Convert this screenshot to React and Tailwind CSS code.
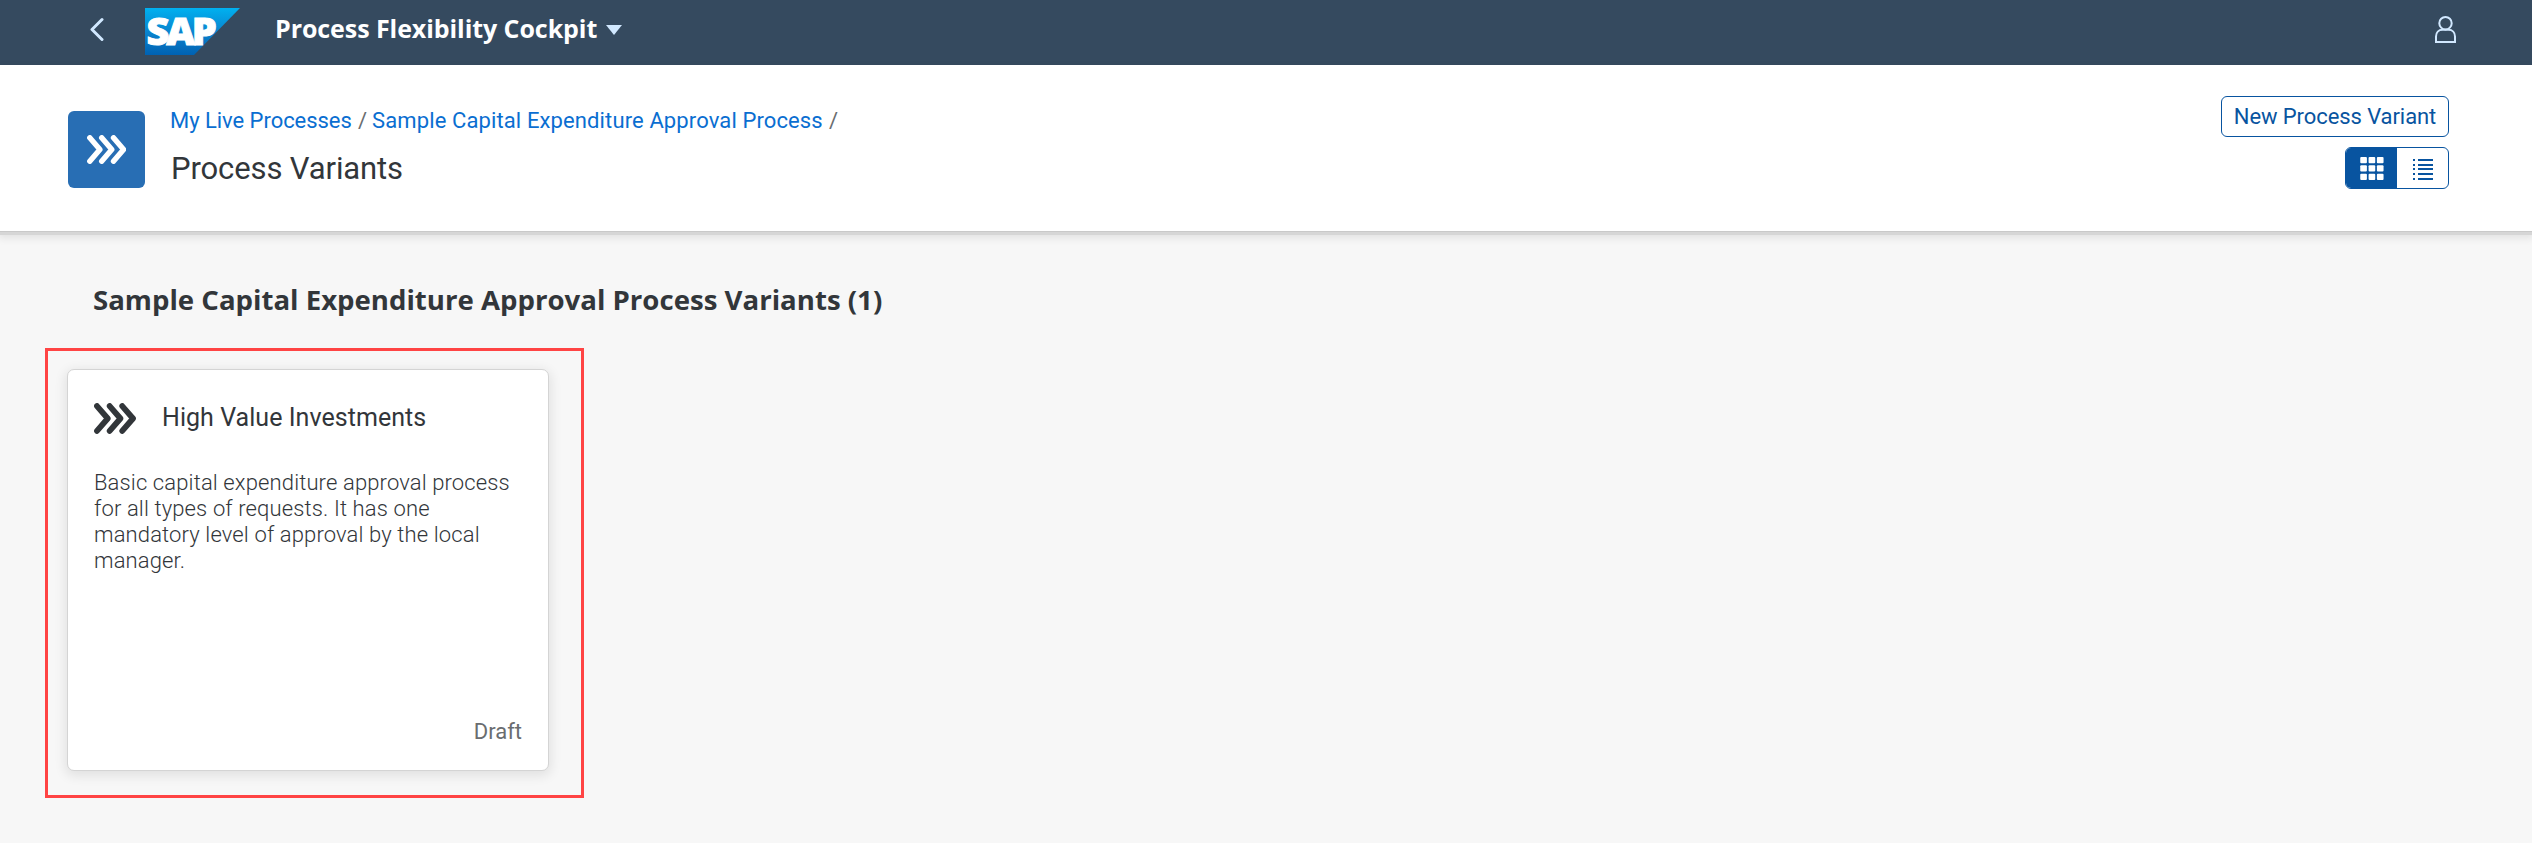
function Chevrons({ className }) {
  return (
    <svg className={className} viewBox="0 0 39.4 29" fill="none" stroke="currentColor" strokeWidth="5.4" strokeLinecap="round" strokeLinejoin="round">
      <path d="M2.8 2.8 12.9 14.5 2.8 26.2" />
      <path d="M14.7 2.8 24.8 14.5 14.7 26.2" />
      <path d="M26.5 2.8 36.6 14.5 26.5 26.2" />
    </svg>
  );
}

function SapLogo() {
  return (
    <svg className="h-[47px] w-[95px] overflow-visible" viewBox="0 0 95 47">
      <defs>
        <linearGradient id="sap" x1="0" y1="0" x2="0" y2="1">
          <stop offset="0" stopColor="#00b1f0" />
          <stop offset="0.5" stopColor="#0a85cf" />
          <stop offset="1" stopColor="#0062b3" />
        </linearGradient>
      </defs>
      <path d="M0 0H95L49 47H0Z" fill="url(#sap)" />
      <text x="1.5" y="37" textLength="67" lengthAdjust="spacingAndGlyphs" fontFamily="Open Sans, sans-serif" fontWeight="800" fontSize="37" letterSpacing="-3" fill="#fff" stroke="#fff" strokeWidth="1">SAP</text>
    </svg>
  );
}

function ShellHeader() {
  return (
    <header className="flex h-[65px] items-start bg-[#354a5f] pl-[90px] pr-[76px] text-[#d1e8ff]">
      <svg className="mt-[17px] h-[25px] w-[15px]" viewBox="0 0 15 25" fill="none" stroke="currentColor" strokeWidth="3" strokeLinecap="round" strokeLinejoin="round">
        <path d="M12 2.5 2 12.5 12 22.5" />
      </svg>
      <div className="ml-10 mt-2">
        <SapLogo />
      </div>
      <h1 className="ml-[35px] mt-[9px] w-[323px] whitespace-nowrap font-['Open_Sans',sans-serif] text-[25px] font-bold leading-[38px] tracking-[-0.07px] text-white">Process Flexibility Cockpit</h1>
      <svg className="ml-[8px] mt-[25px] h-[10px] w-4" viewBox="0 0 16 10" fill="currentColor">
        <path d="M0 0H16L8 10Z" />
      </svg>
      <svg className="ml-auto mt-4 h-[27px] w-[21px]" viewBox="0 0 21 27" fill="none" stroke="currentColor" strokeWidth="2">
        <ellipse cx="10.5" cy="7.2" rx="6.2" ry="6.2" />
        <path d="M1 26V20.5C1 16.5 3.6 13.8 7.5 13.8H13.5C17.4 13.8 20 16.5 20 20.5V26Z" />
      </svg>
    </header>
  );
}

function GridIcon() {
  const offsets = [0, 8.5, 17];
  return (
    <svg className="h-[23.5px] w-6" viewBox="0 0 24 24" fill="currentColor">
      {offsets.map((y) => offsets.map((x) => <rect key={`${x}-${y}`} x={x} y={y} width="6.8" height="6.4" rx="1" />))}
    </svg>
  );
}

function ListIcon() {
  return (
    <svg className="h-[21px] w-5" viewBox="0 0 20 21" fill="currentColor" shapeRendering="crispEdges">
      {[0, 5, 9, 14, 19].map((y) => (
        <g key={y}>
          <rect x="0" y={y} width="2" height="2" />
          <rect x="5" y={y} width="15" height="2" />
        </g>
      ))}
    </svg>
  );
}

function PageHeader() {
  return (
    <section className="relative flex h-[166px] items-start bg-white pl-[68px] pr-[83px] shadow-[0_1px_0_#c9c9c9,0_4px_0_#d6d6d6,0_5px_8px_2px_rgba(0,0,0,0.09)]">
      <div className="mt-[46px] flex h-[77px] w-[77px] items-center justify-center rounded-[6px] bg-[#286eb4] text-white">
        <Chevrons className="h-[29px] w-[39.4px]" />
      </div>
      <div className="ml-[25px] mt-[42px] whitespace-nowrap">
        <nav className="flex text-[22px] leading-[27px] text-[#0a6ed1]">
          <a className="w-[188px] tracking-[-0.04px]">My Live Processes</a>
          <span className="w-[14px] text-[#6a6d70]">/</span>
          <a className="w-[457px] tracking-[0.12px]">Sample Capital Expenditure Approval Process</a>
          <span className="text-[#6a6d70]">/</span>
        </nav>
        <h2 className="ml-[1px] mt-[15px] text-[31px] leading-[40px] tracking-[-0.12px] text-[#32363a]">Process Variants</h2>
      </div>
      <div className="ml-auto mt-[31px] flex flex-col items-end gap-[10px] text-[#0854a0]">
        <button className="h-[41px] w-[228px] whitespace-nowrap rounded-[6px] border border-[#0854a0] text-[22px] leading-[37px] tracking-[-0.08px]">New Process Variant</button>
        <div className="flex h-[42px] w-[104px] overflow-hidden rounded-[6px] border border-[#0854a0]">
          <button className="flex w-[51px] items-center justify-center bg-[#0854a0] pt-px text-white">
            <GridIcon />
          </button>
          <button className="flex flex-1 items-center justify-center pt-0.5">
            <ListIcon />
          </button>
        </div>
      </div>
    </section>
  );
}

function VariantCard() {
  return (
    <article className="flex h-[402px] w-[482px] flex-col rounded-[7px] border border-[#d4d4d4] bg-white px-[26px] shadow-[0_3px_12px_2px_rgba(0,0,0,0.09)]">
      <div className="mt-[33px] flex h-[31px] items-center text-[#32363a]">
        <Chevrons className="h-[31px] w-[42px]" />
        <h4 className="mb-[2px] ml-[26px] whitespace-nowrap text-[25px] leading-[31px] tracking-[0.05px]">High Value Investments</h4>
      </div>
      <p className="mt-[36px] text-[22px] font-light leading-[26px] tracking-[0.13px] text-[#32363a]">
        Basic capital expenditure approval process
        <br />
        for all types of requests. It has one
        <br />
        mandatory level of approval by the local
        <br />
        manager.
      </p>
      <span className="mb-[24px] mt-auto self-end text-[22px] leading-[28px] text-[#6a6d70]">Draft</span>
    </article>
  );
}

export default function App() {
  return (
    <div className="flex h-[843px] w-[2532px] flex-col overflow-hidden bg-[#f7f7f7] font-['Roboto',sans-serif]">
      <ShellHeader />
      <PageHeader />
      <main className="pl-[45px]">
        <h3 className="ml-[48px] mt-[48px] whitespace-nowrap font-['Open_Sans',sans-serif] text-[27.6px] font-bold leading-[40px] text-[#32363a]">Sample Capital Expenditure Approval Process Variants (1)</h3>
        <div className="mt-[29px] h-[450px] w-[539px] border-[3px] border-[#ff4444] pl-[19px] pt-[18px]">
          <VariantCard />
        </div>
      </main>
    </div>
  );
}
